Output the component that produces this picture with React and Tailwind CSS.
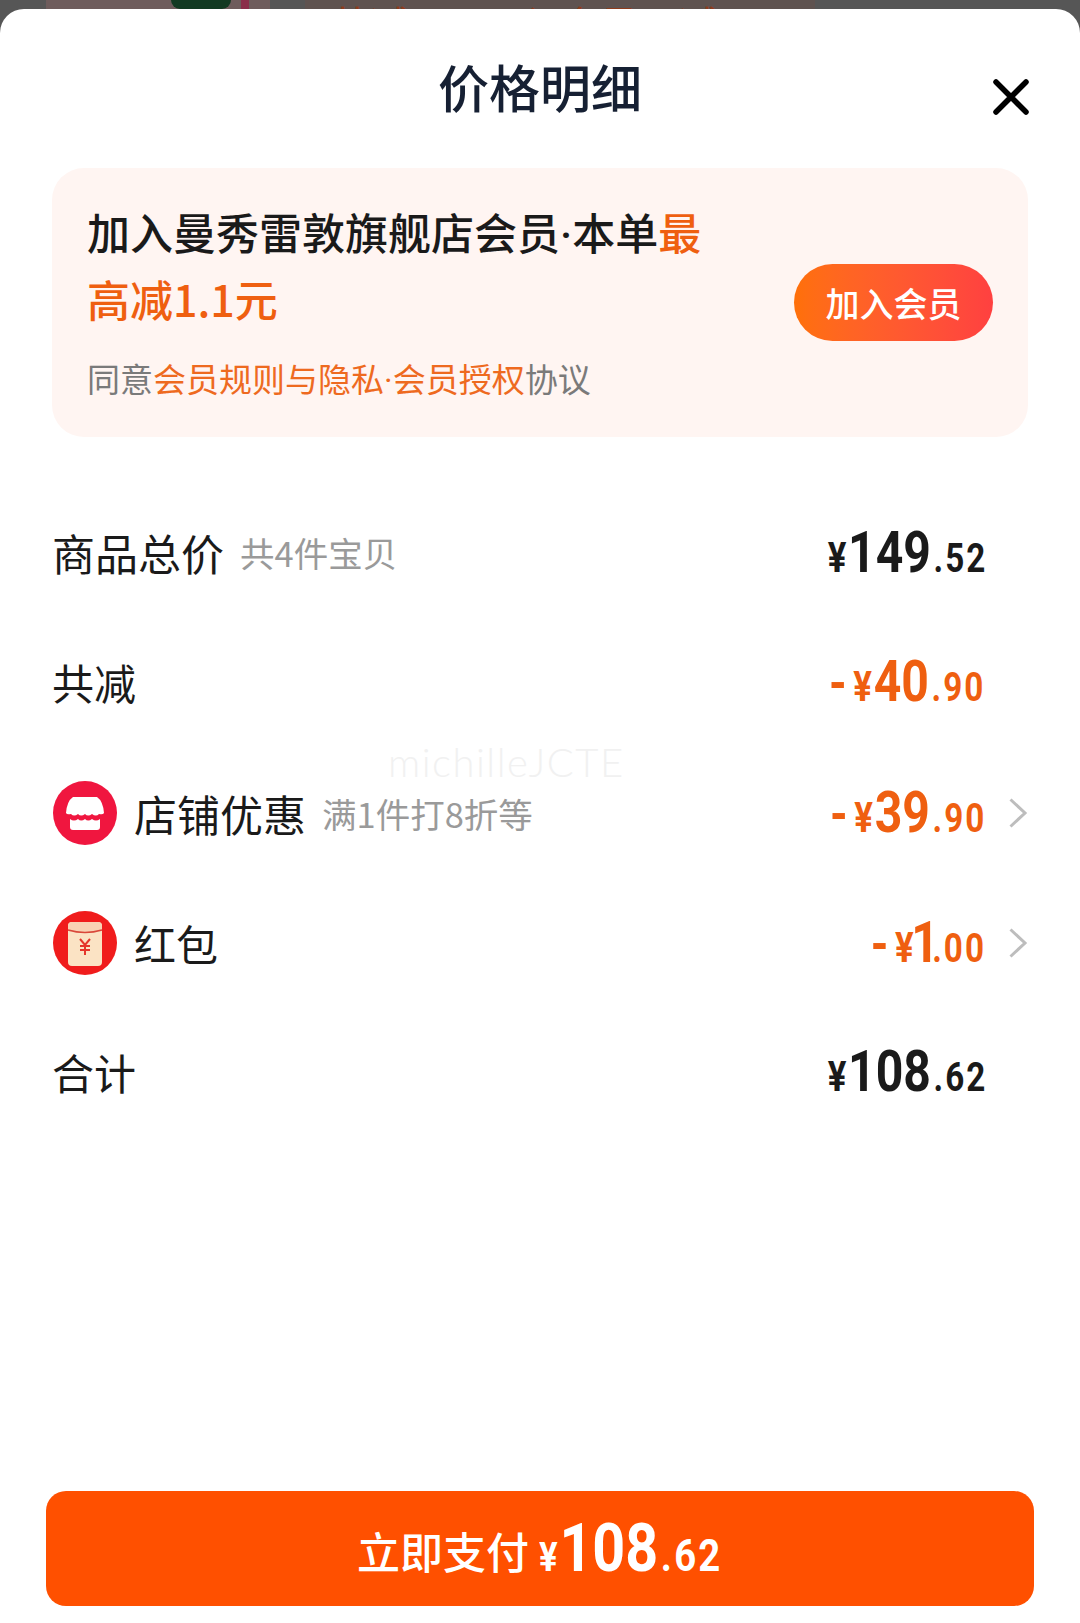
const cjk = { fontFamily: '"Noto Sans CJK SC", "Noto Sans", sans-serif' };
const num = { fontFamily: 'Roboto, "Liberation Sans", sans-serif' };

function Price({ minus, big, small, orange, tight }) {
  return (
    <span className={`flex items-baseline font-bold leading-none origin-right scale-x-[0.83] mb-[2px] ${orange ? 'text-[#ef5f10]' : 'text-[#1a1a1a]'}`} style={num}>
      {minus && <span className="text-[54px] mr-[8px]">-</span>}
      <span className={`text-[42px] ${tight ? 'mr-[-3px]' : 'mr-[2px]'}`}>¥</span>
      <span className="text-[58px]">{big}</span>
      <span className={`text-[40px] tracking-[2.5px] ${tight ? 'ml-[-8px]' : 'ml-[3px]'}`}>.{small}</span>
    </span>
  );
}

function Chevron() {
  return (
    <svg width="20" height="32" viewBox="0 0 20 32" fill="none" className="ml-[22px]">
      <path d="M2.5 2.5 L17 16 L2.5 29.5" stroke="#bdbdbd" strokeWidth="3" />
    </svg>
  );
}

function ShopIcon() {
  return (
    <svg width="64" height="64" viewBox="0 0 64 64" className="shrink-0 ml-[1px]">
      <circle cx="32" cy="32" r="32" fill="#f0163f" />
      <path d="M20 16 H44 Q50 20 51 32 Q50 34 46 33 Q43 36 39 33 Q35 36 32 33 Q28 36 25 33 Q21 36 18 33 Q14 34 13 32 Q14 20 20 16 Z" fill="#ffffff" />
      <path d="M17 38 Q21 41 25 38 Q28 41 32 38 Q35 41 39 38 Q43 41 47 38 V46 Q47 49 44 49 H20 Q17 49 17 46 Z" fill="#ffffff" />
    </svg>
  );
}

function PacketIcon() {
  return (
    <svg width="64" height="64" viewBox="0 0 64 64" className="shrink-0 ml-[1px]">
      <circle cx="32" cy="32" r="32" fill="#f01c1c" />
      <rect x="15" y="11" width="34" height="44" rx="4" fill="#fbe3c4" />
      <path d="M15 15 Q15 11 19 11 H45 Q49 11 49 15 V19 Q32 23 15 19 Z" fill="#f9d2b4" />
      <path d="M15 19 Q32 24 49 19" fill="none" stroke="#d9483a" strokeWidth="1.5" />
      <path d="M27 28 L32 34 L37 28 M32 34 V44 M27 35 H37 M27 39 H37" fill="none" stroke="#e5352b" strokeWidth="2" />
    </svg>
  );
}

function Row({ children, right, className = '' }) {
  return (
    <div className={`flex items-center justify-between ${className}`}>
      <div className="flex items-center">{children}</div>
      {right}
    </div>
  );
}

export default function App() {
  return (
    <div className="w-[1080px] h-[1623px] overflow-hidden bg-[#565656] flex flex-col" style={cjk}>
      <div className="h-[9px] flex shrink-0 overflow-hidden">
        <div className="ml-[46px] w-[224px] h-full flex bg-[#6e5c5c]">
          <div className="ml-[125px] w-[60px] bg-[#123a22] rounded-b-[20px]" />
          <div className="ml-[10px] w-[8px] bg-[#8a2f4a]" />
        </div>
        <div className="ml-[35px] w-[510px] h-full bg-[#5f5350] overflow-hidden">
          <div className="ml-[25px] mt-[3px] text-[40px] leading-none whitespace-nowrap text-[#8e3c1c]">共减¥40.9 入会员再减1.1元</div>
        </div>
      </div>

      <div className="flex-1 bg-white rounded-t-[24px] flex flex-col relative">
        <div className="h-[159px] shrink-0 relative flex justify-center">
          <h1 className="text-[51px] leading-none font-medium text-[#162033] mt-[52px]">价格明细</h1>
          <svg width="36" height="36" viewBox="0 0 36 36" className="absolute left-[993px] top-[70px]">
            <path d="M3 3 L33 33 M33 3 L3 33" stroke="#000000" strokeWidth="5.5" strokeLinecap="round" />
          </svg>
        </div>

        <div className="mx-[52px] h-[269px] shrink-0 bg-[#fff5f2] rounded-[32px] pl-[35px] pr-[35px] flex items-center justify-between">
          <div className="w-[630px] mt-[-8px]">
            <div className="text-[43px] leading-[67px] font-medium text-[#1a1a1a]">
              加入曼秀雷敦旗舰店会员<span className="leading-none" style={num}>·</span>本单<span className="text-[#ef5f10]">最高减1.1元</span>
            </div>
            <div className="text-[33px] leading-[44px] mt-[24px] text-[#7a7a7a]">
              同意<span className="text-[#ee6a1f]">会员规则与隐私<span className="leading-none" style={num}>·</span>会员授权</span>协议
            </div>
          </div>
          <button className="w-[199px] h-[77px] rounded-full bg-gradient-to-r from-[#ff7008] to-[#ff4040] text-white text-[34px] font-medium flex items-center justify-center">
            加入会员
          </button>
        </div>

        <div className="mx-[52px] mt-[84px] flex flex-col gap-[66px]">
          <Row className="h-[63px] pr-[41px]" right={<Price big="149" small="52" />}>
            <span className="text-[43px] leading-none text-[#1a1a1a]">商品总价</span>
            <span className="text-[34.5px] leading-none text-[#9a9a9a] ml-[16px]">共4件宝贝</span>
          </Row>
          <Row className="h-[63px] pr-[43px]" right={<Price orange minus big="40" small="90" />}>
            <span className="text-[42px] leading-none text-[#1a1a1a]">共减</span>
          </Row>
          <Row className="h-[64px] mt-[2px]" right={<div className="flex items-center"><Price orange minus big="39" small="90" /><Chevron /></div>}>
            <ShopIcon />
            <span className="text-[43px] leading-none text-[#1a1a1a] ml-[17px]">店铺优惠</span>
            <span className="text-[34.5px] leading-none text-[#9a9a9a] ml-[16px]">满1件打8折等</span>
          </Row>
          <Row className="h-[64px]" right={<div className="flex items-center"><Price orange minus tight big="1" small="00" /><Chevron /></div>}>
            <PacketIcon />
            <span className="text-[42px] leading-none text-[#1a1a1a] ml-[17px]">红包</span>
          </Row>
          <Row className="h-[63px] pr-[41px] mt-[-1px]" right={<Price big="108" small="62" />}>
            <span className="text-[42px] leading-none text-[#1a1a1a]">合计</span>
          </Row>
        </div>

        <div className="absolute left-[388px] top-[733px] text-[40px] leading-none tracking-[1.5px] font-light text-[#f1f1f1]" style={{ fontFamily: 'Lato, sans-serif' }}>
          michilleJCTE
        </div>

        <div className="mt-auto mx-[46px] mb-[17px]">
          <button className="w-full h-[115px] rounded-[20px] bg-[#ff5000] text-white flex items-baseline justify-center pt-[25px]">
            <span className="text-[43px] leading-none font-medium -translate-y-[2px]">立即支付</span>
            <span className="w-[184px] ml-[10px] flex items-baseline origin-left scale-x-[0.87] whitespace-nowrap font-bold leading-none" style={num}>
              <span className="text-[40px] mr-[2px]">¥</span>
              <span className="text-[66px]">108</span>
              <span className="text-[44px] ml-[3px] tracking-[2.5px]">.62</span>
            </span>
          </button>
        </div>
      </div>
    </div>
  );
}
